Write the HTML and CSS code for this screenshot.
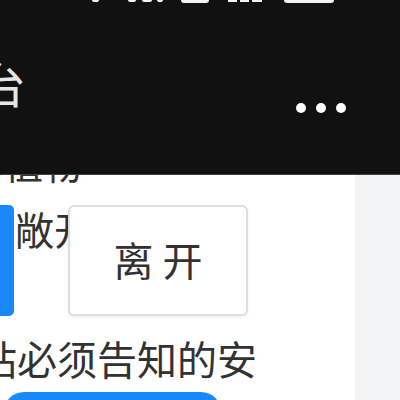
FILE: index.html
```html
<!DOCTYPE html>
<html lang="zh-CN">
<head>
<meta charset="utf-8">
<link rel="stylesheet" href="styles.css">
</head>
<body>
<header class="header">
  <div class="status">
    <i class="st st-a"></i>
    <i class="st st-b"></i><i class="st st-b2"></i><i class="st st-b3"></i>
    <i class="st st-c"></i>
    <i class="st st-d"></i><i class="st st-d2"></i><i class="st st-d3"></i>
    <i class="st st-e"></i>
  </div>
  <div class="nav">
    <div class="title">平台</div>
    <div class="more"><span></span><span></span><span></span></div>
  </div>
</header>
<main class="main">
  <section class="panel">
    <div class="line line-top">的植物</div>
    <div class="actions">
      <div class="btn-cut"></div>
      <div class="hint">敞开</div>
      <div class="btn-leave">离 开</div>
    </div>
    <div class="line line-bottom">站必须告知的安</div>
    <div class="btn-bottom"></div>
  </section>
  <aside class="side"></aside>
</main>
</body>
</html>
```
FILE: styles.css
```css
html, body {
  margin: 0;
  padding: 0;
}
body {
  width: 400px;
  height: 400px;
  overflow: hidden;
  background: #f2f3f5;
  font-family: "Noto Sans CJK SC", "Noto Sans", sans-serif;
}
.header {
  position: relative;
  z-index: 2;
  height: 174px;
  background: #111111;
  border-bottom: 1px solid #3d3d3d;
  display: flex;
  flex-direction: column;
}
.status {
  height: 4px;
  display: flex;
  align-items: flex-start;
  overflow: hidden;
}
.st {
  display: block;
  background: #f4f4f4;
  flex: none;
}
.st-a { margin-left: 92px; width: 7px; height: 2px; border-radius: 0 0 3px 3px; }
.st-b { margin-left: 29px; width: 8px; height: 2px; border-radius: 0 0 2px 2px; }
.st-b2 { margin-left: 6px; width: 10px; height: 2px; border-radius: 0 0 2px 2px; }
.st-b3 { margin-left: 5px; width: 6px; height: 2px; border-radius: 0 0 2px 2px; }
.st-c { margin-left: 18px; width: 28px; height: 3px; border-radius: 0 0 4px 4px; }
.st-d { margin-left: 19px; width: 9px; height: 2px; }
.st-d2 { margin-left: 3px; width: 9px; height: 2px; }
.st-d3 { margin-left: 3px; width: 10px; height: 2px; }
.st-e { margin-left: 22px; width: 50px; height: 3px; border-radius: 0 0 4px 4px; }
.nav {
  display: flex;
  justify-content: space-between;
  align-items: flex-start;
}
.title {
  margin: 52px 0 0 -70px;
  font-size: 48px;
  line-height: 52px;
  color: #e5e5e5;
  white-space: nowrap;
}
.more {
  display: flex;
  gap: 10px;
  margin: 99px 54px 0 0;
}
.more span {
  width: 10px;
  height: 10px;
  border-radius: 50%;
  background: #ffffff;
}
.main {
  display: flex;
  margin-top: -33px;
  height: 300px;
}
.panel {
  flex: none;
  width: 355px;
  background: #ffffff;
}
.side {
  flex: 1;
}
.line {
  font-size: 39px;
  line-height: 40px;
  color: #323233;
  white-space: nowrap;
}
.line-top {
  margin-left: -35px;
}
.actions {
  display: flex;
  margin-top: 23px;
  height: 111px;
}
.btn-cut {
  flex: none;
  width: 24px;
  margin-left: -10px;
  background: #1989fa;
  border-radius: 5px;
}
.hint {
  flex: none;
  margin: 3px 0 0 1px;
  font-size: 39px;
  line-height: 40px;
  color: #323233;
  white-space: nowrap;
}
.btn-leave {
  flex: none;
  z-index: 1;
  box-sizing: border-box;
  width: 180px;
  margin-left: -25px;
  padding-bottom: 4px;
  border: 2px solid #dcdee0;
  border-radius: 6px;
  background: #ffffff;
  box-shadow: 0 2px 3px rgba(0, 0, 0, 0.05);
  display: flex;
  align-items: center;
  justify-content: center;
  font-size: 40px;
  line-height: 40px;
  color: #323233;
  white-space: nowrap;
}
.line-bottom {
  margin: 22px 0 0 -23px;
  font-size: 40px;
}
.btn-bottom {
  margin: 14px 0 0 4px;
  width: 217px;
  height: 60px;
  border-radius: 20px;
  background: #1989fa;
}
```
